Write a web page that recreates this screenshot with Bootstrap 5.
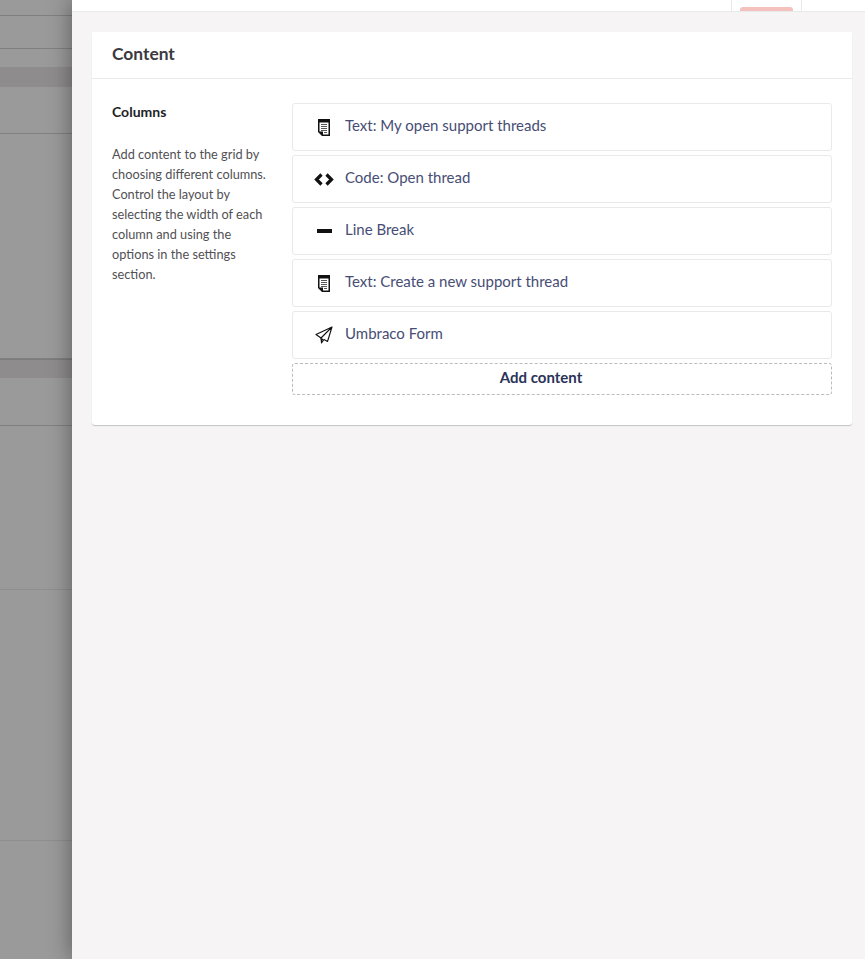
<!DOCTYPE html>
<html lang="en">
<head>
<meta charset="utf-8">
<title>Content</title>
<link href="https://cdn.jsdelivr.net/npm/bootstrap@5.3.0/dist/css/bootstrap.min.css" rel="stylesheet">
<style>
html,body{height:100%;margin:0;overflow:hidden}
body{font-family:Lato,"Liberation Sans",sans-serif;background:#999}
.stage{height:959px;overflow:hidden}
.bg-rows{background:#9a9a9a}
.bg-row{border-bottom:1px solid #808080}
.r1{height:16px}.r2{height:33px}.r3{height:18px;border:0}
.band{background:#8e8c8c;border:0}
.b1{height:20px}.r4{height:47px}.r5{height:225px}.b2{height:19px;border-top:1px solid #7d7b7b}
.r6{height:48px}.r7{height:164px;border-color:#8e8e8e}.r8{height:251px;border-color:#8e8e8e}
.panel{width:793px;background:#f6f4f5;box-shadow:0 0 22px rgba(0,0,0,.42)}
.topbar{height:12px;background:#fff;border-bottom:1px solid #e9e9eb;padding-right:63px}
.topbox{width:71px;height:11px;border-left:1px solid #e9e9eb;border-right:1px solid #e9e9eb;padding:7px 8px 0}
.topbtn{height:4px;background:#f5c1bc;border-radius:3px 3px 0 0}
.pane{margin:20px 13px 0 20px;border:0;border-radius:3px;box-shadow:0 1px 1px rgba(0,0,0,.2)}
.pane-head{height:47px;padding:0 20px;font-size:17.4px;font-weight:700;color:#3a3a3e;background:#fff;border-bottom:1px solid #e9e9eb;line-height:43px}
.pane-body{padding:24px 20px 30px}
.side{width:180px;padding-right:22px;flex:none}
.side-title{font-size:14px;font-weight:700;color:#222226;line-height:18px;margin:0 0 23px}
.side-text{font-size:12.75px;line-height:20px;color:#515054;margin:0}
.items{width:540px;flex:none}
.item{height:48px;margin-bottom:4px;border:1px solid #e9e9eb;border-radius:3px;background:#fff;color:#474d75;font-size:15px;padding:0}
.ico{width:52px;height:46px;padding-left:10px;flex:none}
.lbl{padding-bottom:4px}
.add{height:32px;width:100%;border:1px dashed #bbbabf;border-radius:3px;background:#fff;color:#2a3358;font-size:15px;font-weight:700;line-height:26px;padding:0 42px 4px 0;text-align:center}
</style>
</head>
<body>
<div class="stage position-relative">
  <div class="bg-rows">
    <div class="bg-row r1"></div>
    <div class="bg-row r2"></div>
    <div class="bg-row r3"></div>
    <div class="bg-row band b1"></div>
    <div class="bg-row r4"></div>
    <div class="bg-row r5"></div>
    <div class="bg-row band b2"></div>
    <div class="bg-row r6"></div>
    <div class="bg-row r7"></div>
    <div class="bg-row r8"></div>
    <div style="height:119px"></div>
  </div>
  <div class="panel position-absolute top-0 bottom-0 end-0">
    <div class="topbar d-flex justify-content-end">
      <div class="topbox"><div class="topbtn"></div></div>
    </div>
    <div class="card pane">
      <div class="pane-head">Content</div>
      <div class="pane-body d-flex">
        <div class="side">
          <p class="side-title">Columns</p>
          <p class="side-text">Add content to the grid by choosing different columns. Control the layout by selecting the width of each column and using the options in the settings section.</p>
        </div>
        <div class="items">
          <div class="item d-flex align-items-center">
            <span class="ico d-flex align-items-center justify-content-center">
              <svg width="12" height="17" viewBox="0 0 12 17"><path fill="#111" d="M0 0h12v17H4l-4-4z"/><path fill="#fff" d="M1.500 3.500h9v12H5v-3H1.500z"/><path stroke="#555" stroke-width="1" d="M3 5.500h6M3 7.500h6M3 9.500h6M3 11.500h6M6 13.500h3"/></svg>
            </span>
            <span class="lbl">Text: My open support threads</span>
          </div>
          <div class="item d-flex align-items-center">
            <span class="ico d-flex align-items-center justify-content-center">
              <svg width="20" height="13" viewBox="0 0 20 13"><path fill="none" stroke="#111" stroke-width="3.200" d="M7.500 1.500 2.500 6.500l5 5M12.500 1.500l5 5-5 5"/></svg>
            </span>
            <span class="lbl">Code: Open thread</span>
          </div>
          <div class="item d-flex align-items-center">
            <span class="ico d-flex align-items-center justify-content-center">
              <svg width="15" height="4" viewBox="0 0 15 4"><rect width="15" height="4" fill="#111"/></svg>
            </span>
            <span class="lbl">Line Break</span>
          </div>
          <div class="item d-flex align-items-center">
            <span class="ico d-flex align-items-center justify-content-center">
              <svg width="12" height="17" viewBox="0 0 12 17"><path fill="#111" d="M0 0h12v17H4l-4-4z"/><path fill="#fff" d="M1.500 3.500h9v12H5v-3H1.500z"/><path stroke="#555" stroke-width="1" d="M3 5.500h6M3 7.500h6M3 9.500h6M3 11.500h6M6 13.500h3"/></svg>
            </span>
            <span class="lbl">Text: Create a new support thread</span>
          </div>
          <div class="item d-flex align-items-center">
            <span class="ico d-flex align-items-center justify-content-center">
              <svg width="18" height="18" viewBox="0 0 18 18"><path fill="none" stroke="#111" stroke-width="1.100" stroke-linejoin="round" d="M17 1 1 8.500l5 3.500zM17 1 6 12l.5 5 2.500-3.500 3.500 2z"/><path fill="#111" d="M5.500 12l3 1-2 3z"/></svg>
            </span>
            <span class="lbl">Umbraco Form</span>
          </div>
          <button type="button" class="btn add">Add content</button>
        </div>
      </div>
    </div>
  </div>
</div>
<script src="https://cdn.jsdelivr.net/npm/bootstrap@5.3.0/dist/js/bootstrap.bundle.min.js"></script>
</body>
</html>
